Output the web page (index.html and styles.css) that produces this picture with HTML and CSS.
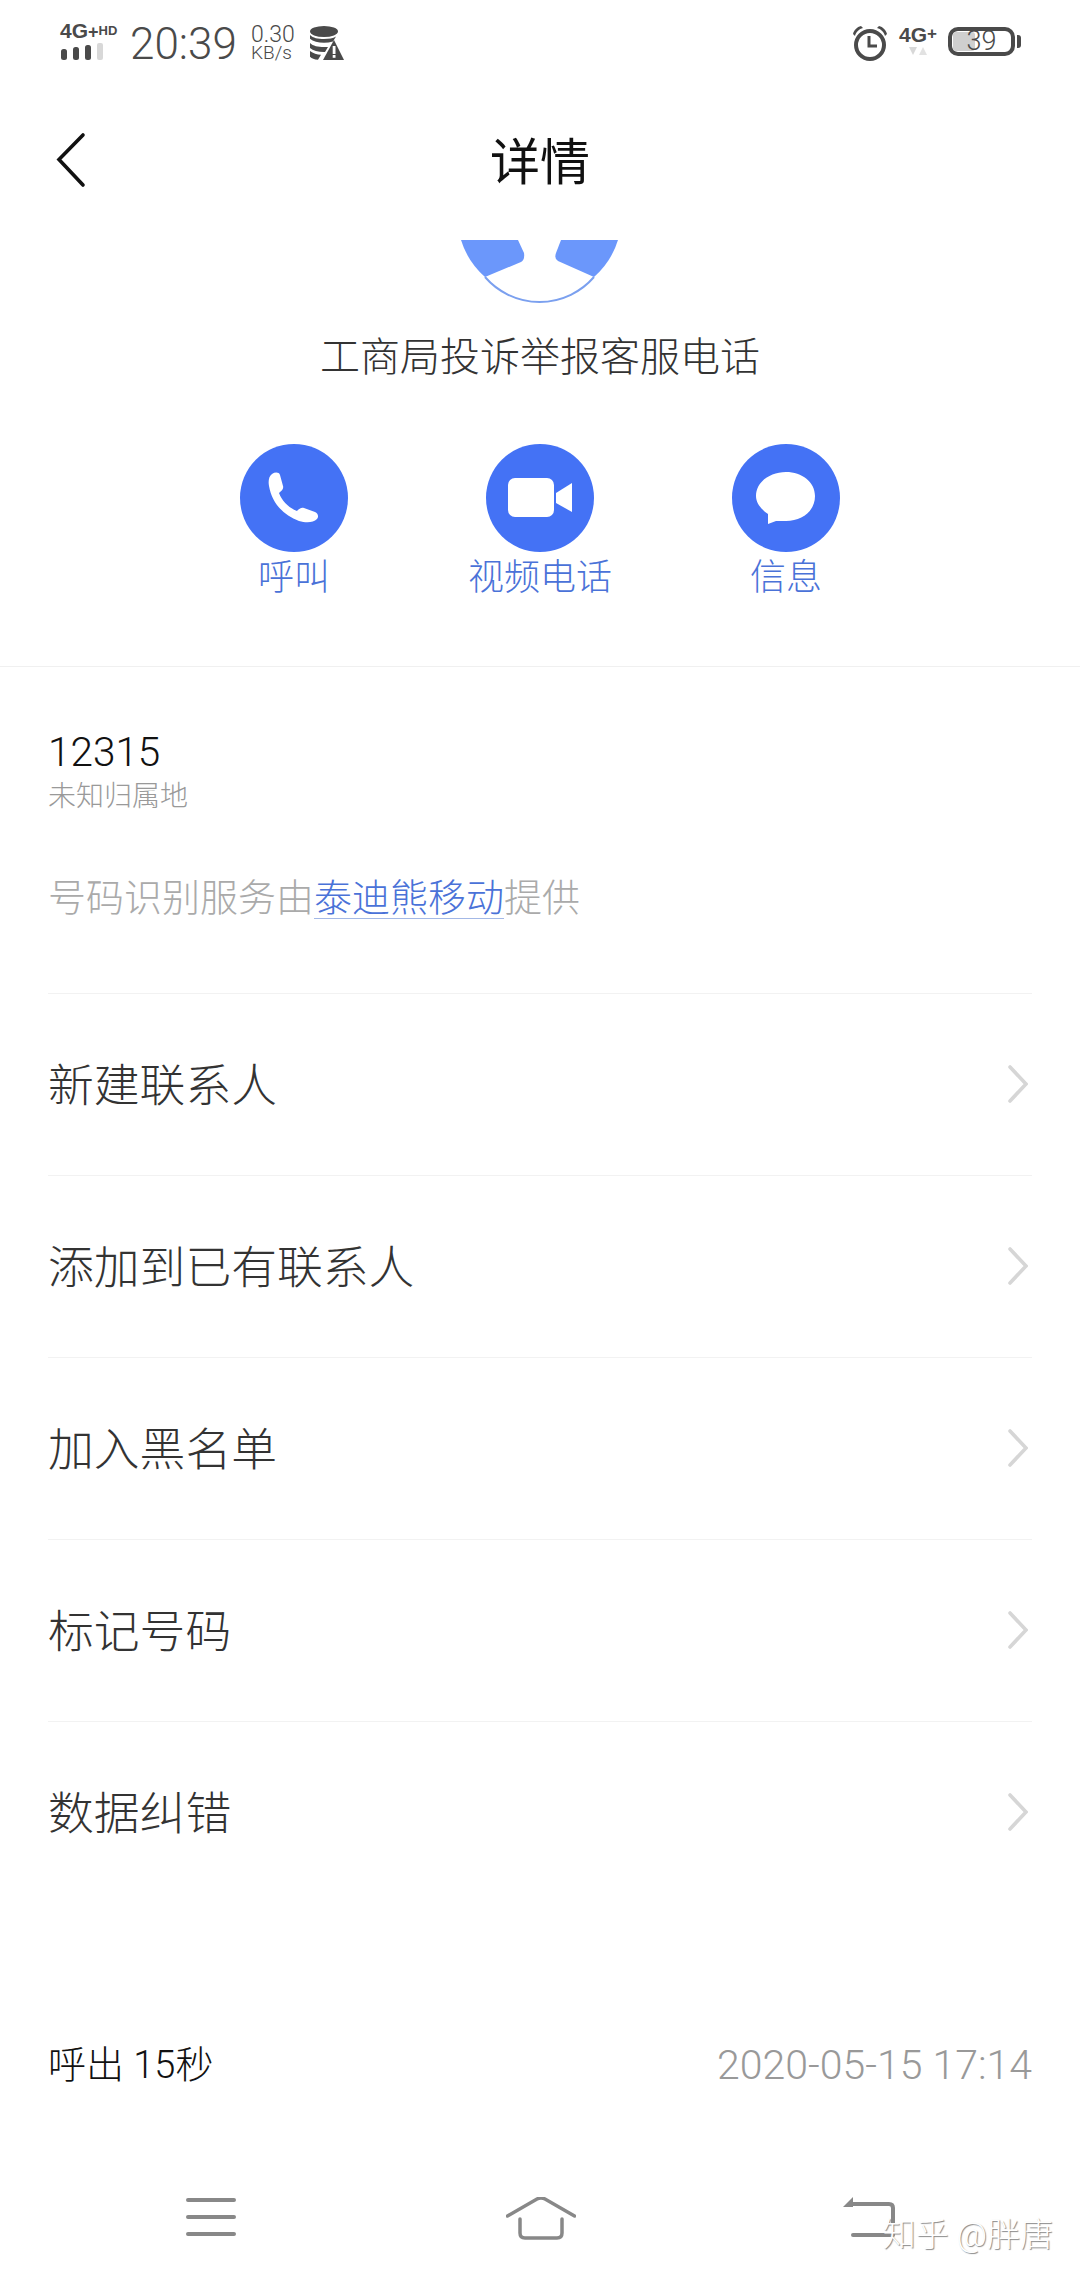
FILE: index.html
```html
<!DOCTYPE html>
<html lang="zh-CN">
<head>
  <meta charset="UTF-8">
  <meta name="viewport" content="width=device-width, initial-scale=1.0">
  <title>详情</title>
  <link rel="stylesheet" href="styles.css">
</head>
<body>

<div id="page">

  <div class="status-bar">
    <div class="status-group">
      <div class="signal">
        <div class="signal-text">4G<span class="signal-plus">+</span><span class="signal-hd">HD</span></div>
        <svg class="signal-bars" width="44" height="17" viewBox="0 0 44 17">
          <rect x="1" y="6" width="6" height="11" rx="2.500" fill="#4a4a4a"/>
          <rect x="13" y="4" width="6" height="13" rx="2.500" fill="#4a4a4a"/>
          <rect x="25" y="2" width="6" height="15" rx="2.500" fill="#4a4a4a"/>
          <rect x="37" y="0" width="6" height="17" rx="2" fill="#d8d8d8"/>
        </svg>
      </div>
      <div class="clock">20:39</div>
      <div class="speed">
        <div class="speed-value">0.30</div>
        <div class="speed-unit">KB/s</div>
      </div>
      <svg class="data-icon" width="34" height="34" viewBox="0 0 34 34">
        <ellipse cx="14" cy="5.500" rx="14" ry="5.500" fill="#4a4a4a"/>
        <path d="M0 9c3 3 8 4 14 4 5 0 9-.7 12-2.500l-3 5c-3 .8-6 1.300-9 1.300-6 0-11-1.300-14-4z" fill="#4a4a4a"/>
        <path d="M0 17c3 3 8 4 14 4h4l-3 5h-1c-6 0-11-1.300-14-4z" fill="#4a4a4a"/>
        <path d="M0 25c3 2.500 7 3.500 11 3.800L8 33.800c-4-.3-6-1.300-8-3z" fill="#4a4a4a"/>
        <path d="M24 14l10 20H13z" fill="#4a4a4a"/>
        <rect x="22.700" y="20" width="2.800" height="8" fill="#fff"/>
        <rect x="22.700" y="29" width="2.800" height="2.800" fill="#fff"/>
      </svg>
    </div>
    <div class="status-group status-right">
      <svg class="alarm-icon" width="36" height="36" viewBox="0 0 36 36">
        <circle cx="18" cy="20" r="14" fill="none" stroke="#4a4a4a" stroke-width="4"/>
        <path d="M17 11v10h8" fill="none" stroke="#4a4a4a" stroke-width="3"/>
        <path d="M1 9c1-4 4-7 8-8l2 2C7 4 4 7 3 11z" fill="#4a4a4a"/>
        <path d="M35 9c-1-4-4-7-8-8l-2 2c4 1 7 4 8 8z" fill="#4a4a4a"/>
      </svg>
      <div class="net">
        <div class="net-text">4G<span class="net-plus">+</span></div>
        <svg width="18" height="8" viewBox="0 0 18 8">
          <path d="M0 0h8L4 8z" fill="#d8d8d8"/>
          <path d="M10 8h8L14 0z" fill="#e2e2e2"/>
        </svg>
      </div>
      <div class="battery">
        <div class="battery-fill"></div>
        <span class="battery-level">39</span>
      </div>
    </div>
  </div>

  <div class="nav-bar">
    <svg class="back-icon" width="30" height="56" viewBox="0 0 30 56">
      <path d="M27 3L3 27.500 27 53" fill="none" stroke="#111" stroke-width="3.600" stroke-linecap="round"/>
    </svg>
    <div class="nav-title">详情</div>
  </div>

  <svg class="avatar" width="160" height="64" viewBox="0 0 160 64">
    <path d="M1 0H58L64 13Q65 20 61 22L25 37A81 81 0 0 1 1 0Z" fill="#6b97fb"/>
    <path d="M101 0H158A81 81 0 0 1 134 37L98 21Q94 19 96 13Z" fill="#6b97fb"/>
    <path d="M25 37A72 72 0 0 0 134 37" fill="none" stroke="#7ba0ef" stroke-width="2"/>
  </svg>

  <div class="contact-name">工商局投诉举报客服电话</div>

  <div class="actions">
    <div class="action">
      <svg class="action-icon" width="108" height="108" viewBox="0 0 108 108">
        <circle cx="54" cy="54" r="54" fill="#4472f5"/>
        <path d="M32 30C35 28 39 28 40 31L43 42C44 45 41 47 39 49C42 57 49 64 57 67C59 65 61 63 64 64L75 68C78 69 79 73 77 75C73 79 66 79 59 77C43 71 32 59 29 42C28 37 29 32 32 30Z" fill="#fff"/>
      </svg>
      <div class="action-label">呼叫</div>
    </div>
    <div class="action">
      <svg class="action-icon" width="108" height="108" viewBox="0 0 108 108">
        <circle cx="54" cy="54" r="54" fill="#4472f5"/>
        <rect x="22" y="34" width="46" height="39" rx="7" fill="#fff"/>
        <path d="M70 49L86 39V68L70 59Z" fill="#fff"/>
      </svg>
      <div class="action-label">视频电话</div>
    </div>
    <div class="action">
      <svg class="action-icon" width="108" height="108" viewBox="0 0 108 108">
        <circle cx="54" cy="54" r="54" fill="#4472f5"/>
        <path d="M54 28C70 28 83 38 83 52C83 67 70 77 54 77C50 77 47 77 44 77L36 80L36 70C29 65 24 59 24 52C24 38 38 28 54 28Z" fill="#fff"/>
      </svg>
      <div class="action-label">信息</div>
    </div>
  </div>

  <div class="number-info">
    <div class="number">12315</div>
    <div class="location">未知归属地</div>
    <div class="provider">号码识别服务由<span class="provider-link">泰迪熊移动</span>提供</div>
  </div>

  <div class="menu-list">
    <div class="menu-row"><span>新建联系人</span><svg class="chevron" width="20" height="38" viewBox="0 0 20 38"><path d="M2 2L18 19 2 36" fill="none" stroke="#d6d6d6" stroke-width="3.600" stroke-linecap="round"/></svg></div>
    <div class="menu-row"><span>添加到已有联系人</span><svg class="chevron" width="20" height="38" viewBox="0 0 20 38"><path d="M2 2L18 19 2 36" fill="none" stroke="#d6d6d6" stroke-width="3.600" stroke-linecap="round"/></svg></div>
    <div class="menu-row"><span>加入黑名单</span><svg class="chevron" width="20" height="38" viewBox="0 0 20 38"><path d="M2 2L18 19 2 36" fill="none" stroke="#d6d6d6" stroke-width="3.600" stroke-linecap="round"/></svg></div>
    <div class="menu-row"><span>标记号码</span><svg class="chevron" width="20" height="38" viewBox="0 0 20 38"><path d="M2 2L18 19 2 36" fill="none" stroke="#d6d6d6" stroke-width="3.600" stroke-linecap="round"/></svg></div>
    <div class="menu-row"><span>数据纠错</span><svg class="chevron" width="20" height="38" viewBox="0 0 20 38"><path d="M2 2L18 19 2 36" fill="none" stroke="#d6d6d6" stroke-width="3.600" stroke-linecap="round"/></svg></div>
  </div>

  <div class="call-log">
    <span class="call-type">呼出 15秒</span>
    <span class="call-time">2020-05-15 17:14</span>
  </div>

  <div class="bottom-nav">
    <svg width="50" height="40" viewBox="0 0 50 40">
      <path d="M2 3H48M2 20H48M2 37H48" fill="none" stroke="#888" stroke-width="4" stroke-linecap="round"/>
    </svg>
    <svg width="70" height="44" viewBox="0 0 70 44">
      <path d="M1.500 19L31 2Q35 0 39 2L68.500 19" fill="none" stroke="#888" stroke-width="3.500" stroke-linecap="round"/>
      <path d="M14 22V36Q14 41 19 41H51Q56 41 56 36V22" fill="none" stroke="#888" stroke-width="3.500" stroke-linecap="round"/>
    </svg>
    <svg width="52" height="44" viewBox="0 0 52 44">
      <path d="M8 7H46Q50 7 50 11V27" fill="none" stroke="#888" stroke-width="4"/>
      <path d="M10 0L0 10H10Z" fill="#888"/>
      <path d="M10 38H50" fill="none" stroke="#888" stroke-width="4" stroke-linecap="round"/>
    </svg>
  </div>

  <div class="watermark">知乎 @胖唐</div>
</div>

</body>
</html>
```

FILE: styles.css
```css
body {
    margin: 0;
    padding: 0;
    background: #fff;
}

#page {
    position: relative;
    width: 1080px;
    height: 2280px;
    overflow: hidden;
    display: flex;
    flex-direction: column;
    font-family: Roboto, "Noto Sans CJK SC", sans-serif;
    font-weight: 300;
    color: #333;
}

.status-bar {
    height: 80px;
    flex: none;
    padding: 0 65px 0 60px;
    display: flex;
    justify-content: space-between;
    align-items: flex-start;
    color: #4a4a4a;
}

.status-group {
    display: flex;
    align-items: flex-start;
    padding-top: 22px;
}

.signal {
    width: 70px;
    flex: none;
}

.signal-text {
    font-family: "Liberation Sans", sans-serif;
    font-weight: 700;
    font-size: 21px;
    line-height: 17px;
    white-space: nowrap;
    width: 60px;
}

.signal-plus {
    font-size: 18px;
}

.signal-hd {
    font-size: 13px;
    vertical-align: 3px;
}

.signal-bars {
    display: block;
    margin-top: 2px;
}

.clock {
    width: 121px;
    font-size: 44px;
    line-height: 44px;
    flex: none;
}

.speed {
    width: 59px;
    flex: none;
    padding-top: 2px;
}

.speed-value {
    font-size: 23px;
    line-height: 21px;
}

.speed-unit {
    font-size: 19px;
    line-height: 16px;
}

.data-icon {
    margin-top: 4px;
}

.status-right {
    gap: 12px;
}

.alarm-icon {
    margin-top: 3px;
}

.net {
    width: 36px;
    display: flex;
    flex-direction: column;
    align-items: center;
}

.net-text {
    font-family: "Liberation Sans", sans-serif;
    font-weight: 700;
    font-size: 21px;
    line-height: 24px;
    white-space: nowrap;
}

.net-plus {
    font-size: 17px;
    vertical-align: 3px;
}

.battery {
    position: relative;
    box-sizing: border-box;
    width: 67px;
    height: 29px;
    margin-top: 5px;
    border: 4px solid #4a4a4a;
    border-radius: 10px;
    display: flex;
    align-items: center;
    justify-content: center;
}

.battery::after {
    content: "";
    position: absolute;
    right: -10px;
    top: 4px;
    width: 4px;
    height: 13px;
    background: #4a4a4a;
    border-radius: 0 3px 3px 0;
}

.battery-fill {
    position: absolute;
    left: 1px;
    top: 1px;
    bottom: 1px;
    width: 22px;
    background: #cfcfcf;
    border-radius: 3px;
}

.battery-level {
    position: relative;
    font-size: 27px;
    line-height: 21px;
}

.nav-bar {
    position: relative;
    height: 160px;
    flex: none;
    padding-left: 56px;
    display: flex;
    align-items: center;
}

.nav-title {
    position: absolute;
    left: 0;
    right: 0;
    top: 47px;
    text-align: center;
    font-size: 50px;
    line-height: 72px;
    font-weight: 400;
    color: #111;
}

.avatar {
    display: block;
    flex: none;
    margin: 0 auto;
    margin-bottom: -2px;
}

.contact-name {
    margin-top: 36px;
    text-align: center;
    font-size: 40px;
    line-height: 40px;
    color: #333;
}

.actions {
    display: flex;
    justify-content: center;
    margin-top: 66px;
    padding-bottom: 70px;
    border-bottom: 1px solid #f0f0f0;
}

.action {
    width: 246px;
    display: flex;
    flex-direction: column;
    align-items: center;
}

.action-icon {
    display: block;
}

.action-label {
    margin-top: 8px;
    font-size: 36px;
    line-height: 36px;
    color: #4a72d8;
}

.number-info {
    padding: 65px 48px 0;
    height: 326px;
    box-sizing: border-box;
    flex: none;
}

.number {
    font-size: 40.500px;
    line-height: 40px;
    color: #111;
}

.location {
    margin-top: 11px;
    font-size: 28px;
    line-height: 28px;
    color: #999;
}

.provider {
    margin-top: 68px;
    font-size: 38px;
    line-height: 38px;
    color: #aaa;
}

.provider-link {
    color: #4a72d8;
    text-decoration: underline;
    text-decoration-color: #a3b8e6;
    text-decoration-thickness: 1px;
    text-underline-offset: 7px;
}

.menu-list {
    margin: 0 48px;
    flex: none;
}

.menu-row {
    height: 182px;
    box-sizing: border-box;
    border-top: 1px solid #f2f2f2;
    display: flex;
    justify-content: space-between;
    align-items: center;
    padding-right: 4px;
    padding-bottom: 2px;
    font-size: 45.800px;
    color: #333;
}

.menu-row span {
    margin-bottom: 3px;
}

.chevron {
    display: block;
}

.call-log {
    margin-top: 142px;
    padding: 0 48px;
    display: flex;
    justify-content: space-between;
    align-items: center;
    line-height: 40px;
}

.call-type {
    font-size: 38px;
    color: #111;
}

.call-time {
    font-size: 41px;
    color: #999;
}

.bottom-nav {
    margin-top: 112px;
    padding-left: 186px;
    display: grid;
    grid-template-columns: 320px 337px 1fr;
    align-items: start;
}

.bottom-nav svg {
    display: block;
}

.watermark {
    position: absolute;
    right: 27px;
    top: 2213px;
    font-size: 33px;
    line-height: 44px;
    white-space: nowrap;
    color: #fff;
    text-shadow: 1px 1px 1px #888;
}
```
